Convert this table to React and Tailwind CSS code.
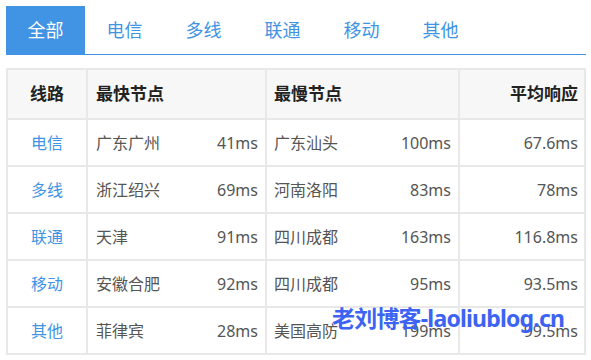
import React, { useState } from "react";

const TABS = ["全部", "电信", "多线", "联通", "移动", "其他"];

const ROWS = [
  { line: "电信", fast: "广东广州", fastMs: "41ms", slow: "广东汕头", slowMs: "100ms", avg: "67.6ms" },
  { line: "多线", fast: "浙江绍兴", fastMs: "69ms", slow: "河南洛阳", slowMs: "83ms", avg: "78ms" },
  { line: "联通", fast: "天津", fastMs: "91ms", slow: "四川成都", slowMs: "163ms", avg: "116.8ms" },
  { line: "移动", fast: "安徽合肥", fastMs: "92ms", slow: "四川成都", slowMs: "95ms", avg: "93.5ms" },
  { line: "其他", fast: "菲律宾", fastMs: "28ms", slow: "美国高防", slowMs: "199ms", avg: "99.5ms" },
];

const FONT = { fontFamily: '"Noto Sans", "Noto Sans CJK SC", sans-serif' };

export default function App() {
  const [active, setActive] = useState(0);

  return (
    <div className="relative w-[591px] h-[360px] bg-white pt-[6px] px-[6px]" style={FONT}>
      {/* tabs */}
      <div className="flex w-[580px] border-b border-[#4193e4]">
        {TABS.map((t, i) => (
          <button
            key={t}
            onClick={() => setActive(i)}
            className={`w-[79px] h-[48px] text-[18px] flex items-center justify-center ${
              active === i ? "bg-[#4193e4] text-white" : "text-[#4193e4]"
            }`}
          >
            {t}
          </button>
        ))}
      </div>

      {/* table */}
      <div className="mt-[13px] w-[580px] border-2 border-[#e8e8e8]">
        <div className="grid grid-cols-[80px_179px_193px_1fr] h-[48px] bg-[#f7f7f7] text-[17px] font-bold text-[#222]">
          <div className="flex items-center justify-center border-r-2 border-[#e8e8e8]">线路</div>
          <div className="flex items-center pl-[8px] border-r-2 border-[#e8e8e8]">最快节点</div>
          <div className="flex items-center pl-[7px] border-r-2 border-[#e8e8e8]">最慢节点</div>
          <div className="flex items-center justify-end pr-[6px]">平均响应</div>
        </div>
        {ROWS.map((r) => (
          <div
            key={r.line}
            className="grid grid-cols-[80px_179px_193px_1fr] h-[47px] border-t-2 border-[#e8e8e8] text-[16px] text-[#555]"
          >
            <div className="flex items-center justify-center border-r-2 border-[#e8e8e8] text-[#4193e4]">{r.line}</div>
            <div className="flex items-center justify-between pl-[8px] pr-[7px] border-r-2 border-[#e8e8e8]">
              <span>{r.fast}</span>
              <span>{r.fastMs}</span>
            </div>
            <div className="flex items-center justify-between pl-[7px] pr-[7px] border-r-2 border-[#e8e8e8]">
              <span>{r.slow}</span>
              <span>{r.slowMs}</span>
            </div>
            <div className="flex items-center justify-end pr-[6px]">{r.avg}</div>
          </div>
        ))}
      </div>

      {/* watermark */}
      <div className="absolute left-[332px] top-[307px] text-[23px] font-bold text-[#3d63f2] tracking-[-0.8px] leading-none">
        老刘博客-laoliublog.cn
      </div>
    </div>
  );
}
